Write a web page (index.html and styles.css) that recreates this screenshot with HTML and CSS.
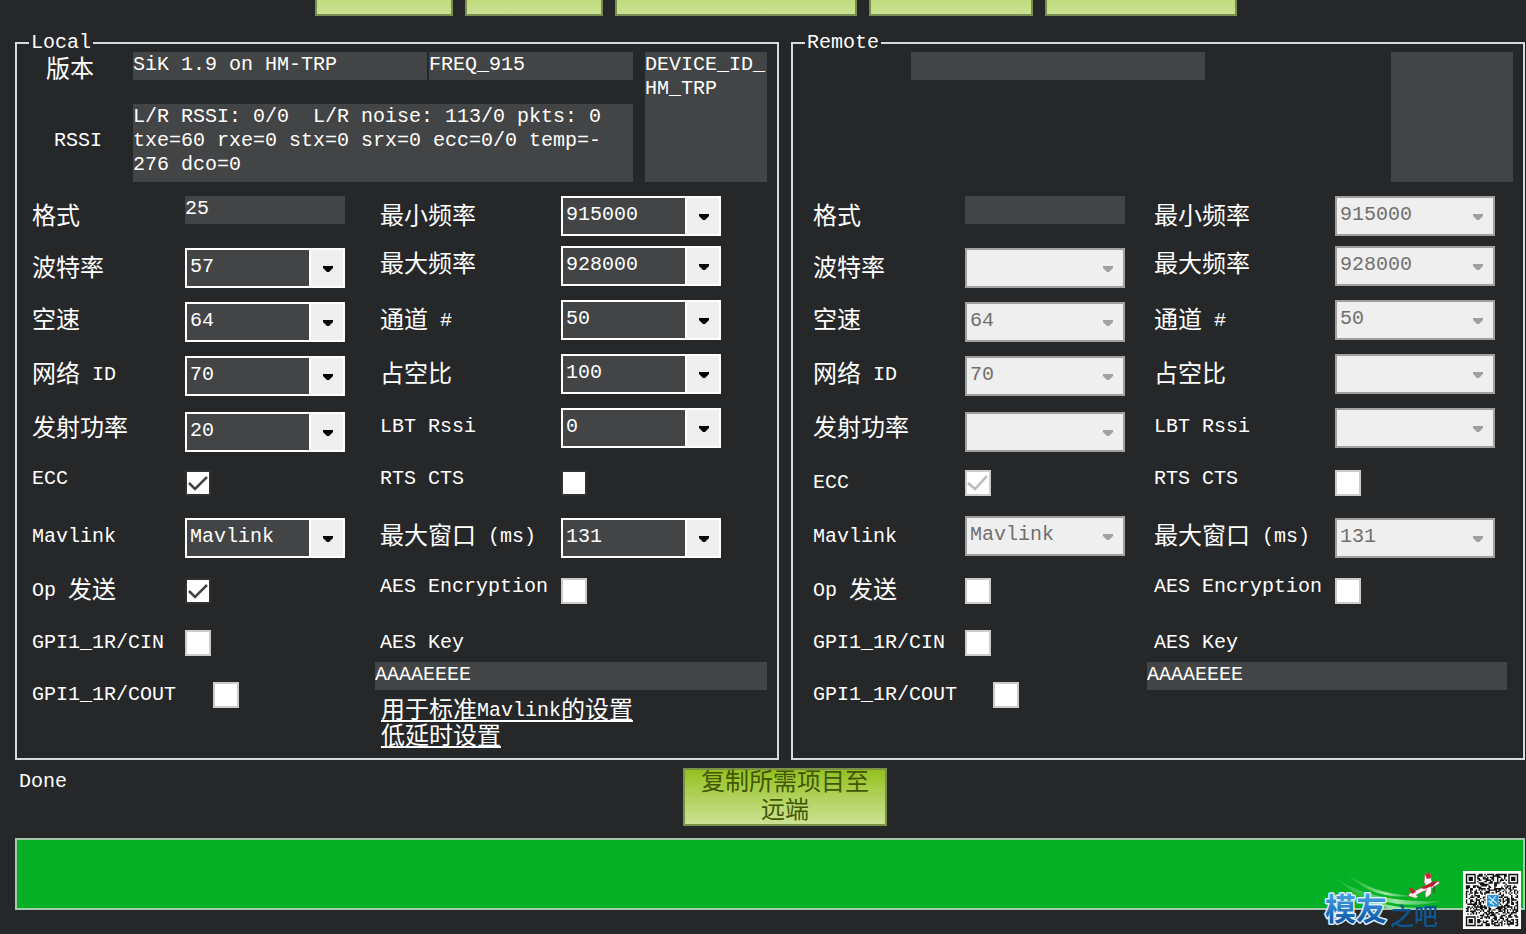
FILE: index.html
```
<!DOCTYPE html>
<html lang="zh-CN">
<head>
<meta charset="utf-8">
<title>SiK Radio</title>
<link rel="stylesheet" href="styles.css">
</head>
<body>
<div class="toolbar">
  <button class="tool w-s" type="button" aria-label="操作 1"></button>
  <button class="tool w-s" type="button" aria-label="操作 2"></button>
  <button class="tool w-xl" type="button" aria-label="操作 3"></button>
  <button class="tool w-m" type="button" aria-label="操作 4"></button>
  <button class="tool w-l" type="button" aria-label="操作 5"></button>
</div>

<main class="panels">
  <fieldset class="panel local">
    <legend>Local</legend>
    <div class="head">
      <div class="head-labels">
        <label class="zh" for="l-ver">版本</label>
        <label for="l-rssi">RSSI</label>
      </div>
      <div class="head-fields">
        <div class="version">
          <input class="field" id="l-ver" value="SiK 1.9 on HM-TRP" readonly>
          <input class="field" aria-label="频段" value="FREQ_915" readonly>
        </div>
        <textarea class="field rssi" id="l-rssi" readonly>L/R RSSI: 0/0  L/R noise: 113/0 pkts: 0
txe=60 rxe=0 stx=0 srx=0 ecc=0/0 temp=-
276 dco=0</textarea>
      </div>
      <textarea class="field device" aria-label="设备" readonly>DEVICE_ID_
HM_TRP</textarea>
    </div>
    <div class="form">
      <div class="names names-a">
        <label for="l-fmt"><span class="zh">格式</span></label>
        <label for="l-baud"><span class="zh">波特率</span></label>
        <label for="l-air"><span class="zh">空速</span></label>
        <label for="l-net"><span class="zh">网络</span> ID</label>
        <label for="l-pow"><span class="zh">发射功率</span></label>
        <label for="l-ecc">ECC</label>
        <label for="l-mav">Mavlink</label>
        <label for="l-op">Op <span class="zh">发送</span></label>
        <label for="l-cin">GPI1_1R/CIN</label>
        <label for="l-cout">GPI1_1R/COUT</label>
      </div>
      <div class="controls controls-a">
        <input class="field" id="l-fmt" value="25" readonly>
        <select id="l-baud"><option>57</option></select>
        <select id="l-air"><option>64</option></select>
        <select id="l-net"><option>70</option></select>
        <select id="l-pow"><option>20</option></select>
        <input class="dark" type="checkbox" id="l-ecc" checked>
        <select id="l-mav"><option>Mavlink</option></select>
        <input class="dark" type="checkbox" id="l-op" checked>
        <input type="checkbox" id="l-cin">
        <input class="shifted" type="checkbox" id="l-cout">
      </div>
      <div class="side">
        <div class="names names-b">
          <label for="l-min"><span class="zh">最小频率</span></label>
          <label for="l-max"><span class="zh">最大频率</span></label>
          <label for="l-ch"><span class="zh">通道</span> #</label>
          <label for="l-duty"><span class="zh">占空比</span></label>
          <label for="l-lbt">LBT Rssi</label>
          <label for="l-rts">RTS CTS</label>
          <label for="l-win"><span class="zh">最大窗口</span> (ms)</label>
          <label for="l-aes">AES Encryption</label>
          <label for="l-key">AES Key</label>
        </div>
        <div class="controls controls-b">
          <select id="l-min"><option>915000</option></select>
          <select id="l-max"><option>928000</option></select>
          <select id="l-ch"><option>50</option></select>
          <select id="l-duty"><option>100</option></select>
          <select id="l-lbt"><option>0</option></select>
          <input class="dark" type="checkbox" id="l-rts">
          <select id="l-win"><option>131</option></select>
          <input type="checkbox" id="l-aes">
        </div>
        <input class="field key" id="l-key" value="AAAAEEEE">
        <div class="links">
          <a href="#standard"><span class="zh">用于标准</span>Mavlink<span class="zh">的设置</span></a>
          <a href="#latency"><span class="zh">低延时设置</span></a>
        </div>
      </div>
    </div>
  </fieldset>

  <fieldset class="panel remote">
    <legend>Remote</legend>
    <div class="head">
      <div class="head-labels"></div>
      <div class="head-fields">
        <input class="field ver-only" aria-label="远端版本" readonly>
      </div>
      <textarea class="field device" aria-label="远端设备" readonly></textarea>
    </div>
    <div class="form">
      <div class="names names-a">
        <label for="r-fmt"><span class="zh">格式</span></label>
        <label for="r-baud"><span class="zh">波特率</span></label>
        <label for="r-air"><span class="zh">空速</span></label>
        <label for="r-net"><span class="zh">网络</span> ID</label>
        <label for="r-pow"><span class="zh">发射功率</span></label>
        <label for="r-ecc">ECC</label>
        <label for="r-mav">Mavlink</label>
        <label for="r-op">Op <span class="zh">发送</span></label>
        <label for="r-cin">GPI1_1R/CIN</label>
        <label for="r-cout">GPI1_1R/COUT</label>
      </div>
      <div class="controls controls-a">
        <input class="field" id="r-fmt" readonly>
        <select id="r-baud" disabled><option></option></select>
        <select id="r-air" disabled><option>64</option></select>
        <select id="r-net" disabled><option>70</option></select>
        <select id="r-pow" disabled><option></option></select>
        <input type="checkbox" id="r-ecc" checked disabled>
        <select id="r-mav" disabled><option>Mavlink</option></select>
        <input type="checkbox" id="r-op" disabled>
        <input type="checkbox" id="r-cin" disabled>
        <input class="shifted" type="checkbox" id="r-cout" disabled>
      </div>
      <div class="side">
        <div class="names names-b">
          <label for="r-min"><span class="zh">最小频率</span></label>
          <label for="r-max"><span class="zh">最大频率</span></label>
          <label for="r-ch"><span class="zh">通道</span> #</label>
          <label for="r-duty"><span class="zh">占空比</span></label>
          <label for="r-lbt">LBT Rssi</label>
          <label for="r-rts">RTS CTS</label>
          <label for="r-win"><span class="zh">最大窗口</span> (ms)</label>
          <label for="r-aes">AES Encryption</label>
          <label for="r-key">AES Key</label>
        </div>
        <div class="controls controls-b">
          <select id="r-min" disabled><option>915000</option></select>
          <select id="r-max" disabled><option>928000</option></select>
          <select id="r-ch" disabled><option>50</option></select>
          <select id="r-duty" disabled><option></option></select>
          <select id="r-lbt" disabled><option></option></select>
          <input type="checkbox" id="r-rts" disabled>
          <select id="r-win" disabled><option>131</option></select>
          <input type="checkbox" id="r-aes" disabled>
        </div>
        <input class="field key" id="r-key" value="AAAAEEEE">
      </div>
    </div>
  </fieldset>
</main>

<div class="status">
  <span class="done" id="state">Done</span>
  <button class="copy" type="button">复制所需项目至<br>远端</button>
</div>
<progress class="bar" value="100" max="100" aria-labelledby="state"></progress>

<div class="watermark">
  <svg class="brand" viewBox="0 0 140 64" role="img" aria-label="模友之吧">
    <defs>
      <linearGradient id="blue" x1="0" y1="0" x2="0" y2="1">
        <stop offset="0.2" stop-color="#4aa6e6"/>
        <stop offset="0.9" stop-color="#0b4fa0"/>
      </linearGradient>
      <linearGradient id="trail" x1="0" y1="0" x2="1" y2="0">
        <stop offset="0" stop-color="#7fe08c" stop-opacity="0"/>
        <stop offset="0.6" stop-color="#c4f4c8" stop-opacity="0.8"/>
        <stop offset="1" stop-color="#5fd070" stop-opacity="0.4"/>
      </linearGradient>
    </defs>
    <path d="M8 4C34 22 66 33 121 31C86 40 42 33 8 4Z" fill="url(#trail)"/>
    <path d="M24 2C44 17 62 24 92 26C64 29 42 21 24 2Z" fill="url(#trail)"/>
    <path d="M20 10C46 32 72 40 108 37C72 44 42 37 20 10Z" fill="url(#trail)"/>
    <path d="M87 26L89 23L100 18L110 13L117 11L119 13L112 18L101 22L92 27Z" fill="#f5eff1" stroke="#9a3a42" stroke-width="0.6"/>
    <path d="M104 4L109 3L111 12L110 24L105 28L104 24L106 17L103 12Z" fill="#fafafa" stroke="#b0505a" stroke-width="0.6"/>
    <path d="M104 4L109 3L110 8L106 9Z" fill="#cb2230"/>
    <path d="M100 18L111 12L117 11L112 16L103 19Z" fill="#b71f2e"/>
    <path d="M88 18L91 18L95 22L91 24Z" fill="#cb2230"/>
    <path d="M89 26L94 24L97 27L94 28Z" fill="#f3e4e6"/>
    <path d="M113 16V23" stroke="#3c4a3c" stroke-width="1.2"/>
    <text class="brand-main" x="4" y="50">模友</text>
    <text class="brand-sub" x="69" y="55">之吧</text>
  </svg>
  <svg class="qr" viewBox="0 0 41 41" role="img" aria-label="二维码">
    <rect width="41" height="41" fill="#fff"/>
    <path id="modules" fill="#111"/>
    <rect x="16" y="16" width="9" height="9" fill="#fff"/>
    <rect x="17" y="17" width="8" height="8" fill="#2592dc"/>
    <path d="M18 18L24 23M23 18L19 23M18 21L22 24" stroke="#d9f0ff" stroke-width="0.8" fill="none"/>
  </svg>
</div>
<script src="script.js"></script>
</body>
</html>
```
FILE: styles.css
```
* { box-sizing: border-box; }

body {
  margin: 0;
  padding: 0 1px 0 15px;
  min-height: 100vh;
  position: relative;
  background: #262729;
  color: #fff;
  font: 20px/24px "Liberation Mono", "Noto Sans CJK SC", monospace;
}

input, select, textarea, button { font: inherit; color: inherit; margin: 0; }

.zh { font-size: 24px; vertical-align: -2px; }

.toolbar { display: flex; gap: 12px; padding-left: 300px; }

.tool {
  height: 16px;
  padding: 0;
  border: 2px solid #7b8d50;
  border-top: 0;
  background: linear-gradient(#c0dc7c, #cbe094);
}
.w-s { width: 138px; }
.w-m { width: 164px; }
.w-l { width: 192px; }
.w-xl { width: 242px; }

.panels {
  display: grid;
  grid-template-columns: 764fr 734fr;
  gap: 12px;
  padding-top: 18px;
}

.panel {
  min-width: 0;
  margin: 0;
  padding: 0 0 10px;
  border: 2px solid #d9dadb;
}
.panel legend { margin-left: 12px; padding: 0 2px; line-height: 18px; }

.head {
  display: grid;
  grid-template-columns: 116px 1fr 122px;
  padding-right: 10px;
  height: 130px;
}
.remote .head { grid-template-columns: 118px 1fr 122px; }

.head-labels {
  display: grid;
  grid-template-rows: 70px 24px;
  padding: 7px 0 0 29px;
}
.head-labels label + label { padding-left: 8px; }
.head-fields {
  display: flex;
  flex-direction: column;
  justify-content: space-between;
  padding-right: 12px;
}
.version { display: grid; grid-template-columns: 294fr 204fr; gap: 2px; }

.field {
  display: block;
  width: 100%;
  min-width: 0;
  height: 28px;
  padding: 0 0 4px;
  border: 0;
  border-radius: 0;
  outline: 0;
  background: #434445;
  resize: none;
  overflow: hidden;
}
textarea.field { padding: 1px 0 0; }
.rssi { height: 78px; }
.device { height: 130px; }
.ver-only { width: 294px; }

.form { display: grid; grid-template-columns: 168px 160px 1fr; padding-top: 14px; }
.remote .form { grid-template-columns: 172px 160px 1fr; }

.names, .controls { display: grid; align-content: start; }
.names { padding-top: 9px; white-space: nowrap; }
.names label { height: 24px; }

.names-a { grid-template-rows: 52px 52px 54px 54px 50px 58px 54px 52px 52px 24px; padding-left: 15px; }
.remote .names-a { grid-template-rows: 52px 52px 54px 54px 54px 54px 54px 52px 52px 24px; padding-left: 20px; }
.controls-a { grid-template-rows: 52px 54px 54px 56px 58px 48px 60px 52px 52px 28px; }
.remote .controls-a { grid-template-rows: 52px 54px 54px 56px 58px 46px 62px 52px 52px 28px; }

.side {
  display: grid;
  grid-template-columns: 186px 160px 1fr;
  align-content: start;
  padding: 0 10px 0 30px;
}
.remote .side { grid-template-columns: 188px 160px 1fr; padding: 0 16px 0 22px; }
.names-b { grid-template-rows: 48px 56px 54px 52px 52px 58px 50px 56px 24px; padding-left: 5px; }
.remote .names-b { padding-left: 7px; }
.controls-b { grid-template-rows: 50px 54px 54px 54px 62px 48px 60px 84px; }
.key { grid-column: 1 / -1; }

.links {
  grid-column: 1 / -1;
  display: grid;
  justify-items: start;
  row-gap: 2px;
  padding: 8px 0 0 6px;
}
.links a {
  height: 24px;
  line-height: 26px;
  color: #fff;
  text-decoration: none;
  border-bottom: 2px solid #fff;
}

select {
  appearance: none;
  width: 160px;
  height: 40px;
  padding: 0 36px 2px 3px;
  border: 2px solid #fff;
  border-radius: 0;
  background:
    url("data:image/svg+xml,%3Csvg xmlns='http://www.w3.org/2000/svg' width='10' height='6'%3E%3Cpath d='M0 0h10v2L6 6H4L0 2z' fill='%23000'/%3E%3C/svg%3E") no-repeat right 10px top 16px,
    linear-gradient(90deg, #fff 2px, #efefef 2px) no-repeat right / 34px 100%,
    #434445;
}
select:disabled {
  opacity: 1;
  color: #707070;
  border-color: #a0a0a0;
  background:
    url("data:image/svg+xml,%3Csvg xmlns='http://www.w3.org/2000/svg' width='10' height='6'%3E%3Cpath d='M0 0h10v2L6 6H4L0 2z' fill='%23a0a0a0'/%3E%3C/svg%3E") no-repeat right 10px top 16px,
    #efefef;
}

input[type="checkbox"] {
  appearance: none;
  width: 26px;
  height: 26px;
  border: 2px solid #ccc;
  border-radius: 0;
  background: #fff no-repeat center / 22px 22px;
}
input[type="checkbox"].dark { border-color: #303133; }
input[type="checkbox"]:checked {
  background-image: url("data:image/svg+xml,%3Csvg xmlns='http://www.w3.org/2000/svg' width='22' height='22'%3E%3Cpath d='M2 11l6 6L20 5' fill='none' stroke='%23444' stroke-width='2.5'/%3E%3C/svg%3E");
}
input[type="checkbox"]:checked:disabled {
  background-image: url("data:image/svg+xml,%3Csvg xmlns='http://www.w3.org/2000/svg' width='22' height='22'%3E%3Cpath d='M1 11l7 6L20 4' fill='none' stroke='%23bbb' stroke-width='2.5'/%3E%3C/svg%3E");
}
input[type="checkbox"].shifted { margin-left: 28px; }

.status {
  display: grid;
  grid-template-columns: 668fr 204px 638fr;
  padding: 8px 0 12px;
}
.done { padding-left: 4px; line-height: 28px; }
.copy {
  height: 58px;
  padding: 0 0 4px;
  border: 2px solid #7b9148;
  background: linear-gradient(#94c11f, #cde296);
  color: #405704;
  font-size: 24px;
  line-height: 28px;
}

.bar {
  appearance: none;
  display: block;
  width: 100%;
  height: 72px;
  border: 2px solid #a6c9ae;
  background: #06b025;
}
.bar::-webkit-progress-bar { background: #06b025; }
.bar::-webkit-progress-value { background: #06b025; }

.watermark {
  position: absolute;
  right: 5px;
  top: 870px;
  display: flex;
  gap: 2px;
}
.brand { width: 140px; height: 64px; }
.qr { width: 58px; height: 58px; margin-top: 1px; }
.brand-main {
  font: bold 31px "Noto Sans CJK SC", sans-serif;
  fill: url(#blue);
  stroke: #d9efff;
  stroke-width: 3px;
  stroke-linejoin: round;
  paint-order: stroke;
}
.brand-sub { font: 500 24px "Noto Sans CJK SC", sans-serif; fill: #0c5790; }
```
FILE: script.js
```
// Fills the QR symbol: three finder squares and a field of data modules.
(function () {
  var size = 37, pad = 2, seed = 20157, d = "";
  function next() {
    seed = (seed * 1103515245 + 12345) % 2147483648;
    return seed / 2147483648;
  }
  function finder(x, y) {
    if (x > 7 && x < size - 8) return null;
    if (y > 7 && (y < size - 8 || x > 7)) return null;
    var fx = x > 7 ? x - (size - 7) : x;
    var fy = y > 7 ? y - (size - 7) : y;
    if (fx < 0 || fy < 0 || fx > 6 || fy > 6) return false;
    var r = Math.max(Math.abs(fx - 3), Math.abs(fy - 3));
    return r !== 2;
  }
  for (var y = 0; y < size; y++) {
    for (var x = 0; x < size; x++) {
      var f = finder(x, y);
      var on = f === null ? next() < 0.52 : f;
      if (on) d += "M" + (x + pad) + " " + (y + pad) + "h1v1h-1z";
    }
  }
  document.getElementById("modules").setAttribute("d", d);
})();
```
